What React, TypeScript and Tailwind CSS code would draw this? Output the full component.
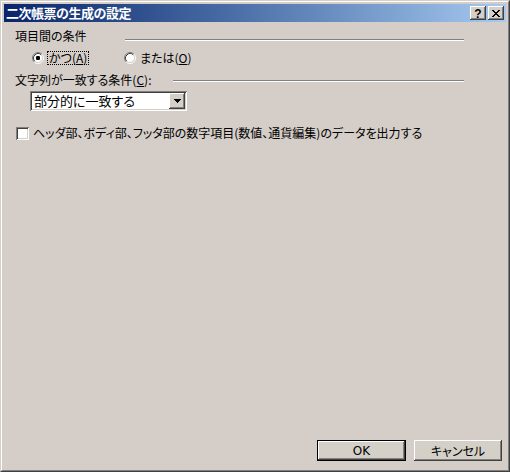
import React from "react";

const raised =
  "shadow-[inset_-1px_-1px_#404040,inset_1px_1px_#ffffff,inset_-2px_-2px_#808080,inset_2px_2px_#d4d0c8]";
const sunken =
  "shadow-[inset_1px_1px_#808080,inset_-1px_-1px_#ffffff,inset_2px_2px_#404040,inset_-2px_-2px_#d4d0c8]";

function Radio({ checked }: { checked?: boolean }) {
  return (
    <svg width="12" height="12" viewBox="0 0 12 12" className="shrink-0">
      <circle cx="6" cy="6" r="4.5" fill="#ffffff" />
      <path d="M2.11 9.89 A5.5 5.5 0 0 1 9.89 2.11" stroke="#808080" strokeWidth="1" fill="none" />
      <path d="M9.89 2.11 A5.5 5.5 0 0 1 2.11 9.89" stroke="#ffffff" strokeWidth="1" fill="none" />
      <path d="M2.82 9.18 A4.5 4.5 0 0 1 9.18 2.82" stroke="#404040" strokeWidth="1" fill="none" />
      <path d="M9.18 2.82 A4.5 4.5 0 0 1 2.82 9.18" stroke="#d4d0c8" strokeWidth="1" fill="none" />
      {checked && <rect x="4" y="4" width="4" height="4" rx="1.2" fill="#000000" />}
    </svg>
  );
}

function Etched() {
  return <div className="flex-1 h-[2px] border-t border-t-[#808080] border-b border-b-[#ffffff]" />;
}

export default function App() {
  return (
    <div
      className="w-[510px] h-[472px] bg-[#d4cdc8] border border-t-[#d4d0c8] border-l-[#d4d0c8] border-r-[#404040] border-b-[#404040] text-black"
      style={{ fontFamily: '"Noto Sans CJK JP", "Noto Sans", sans-serif' }}
    >
      <div className="w-full h-full border border-t-white border-l-white border-r-[#808080] border-b-[#808080] p-[2px] flex flex-col">
        {/* Title bar */}
        <div className="h-[18px] shrink-0 bg-gradient-to-r from-[#0a246a] to-[#a6caf0] flex items-center pl-[2px] pr-[2px]">
          <div className="flex-1 text-white font-bold text-[13px] leading-[18px] tracking-[-0.5px]">
            二次帳票の生成の設定
          </div>
          <div className="flex gap-[2px] items-center">
            <div className={`w-[16px] h-[14px] bg-[#d4d0c8] ${raised} flex items-center justify-center`}>
              <span className="text-[12px] font-bold leading-none mt-[1px]" style={{ fontFamily: '"Liberation Sans", sans-serif' }}>?</span>
            </div>
            <div className={`w-[16px] h-[14px] bg-[#d4d0c8] ${raised} flex items-center justify-center`}>
              <svg width="8" height="7" viewBox="0 0 8 7" shapeRendering="crispEdges">
                <path d="M0 0h2v1h-2zM6 0h2v1h-2zM1 1h2v1h-2zM5 1h2v1h-2zM2 2h4v1h-4zM3 3h2v1h-2zM2 4h4v1h-4zM1 5h2v1h-2zM5 5h2v1h-2zM0 6h2v1h-2zM6 6h2v1h-2z" fill="#000" />
              </svg>
            </div>
          </div>
        </div>

        {/* Body */}
        <div className="flex-1 flex flex-col text-[12px] leading-[14px] [font-feature-settings:'palt'] pr-[42px]">
          <div className="flex items-start mt-[7px] pl-[11px]">
            <div className="w-[110px] h-[14px] whitespace-nowrap">項目間の条件</div>
            <div className="flex-1 mt-[10px] flex"><Etched /></div>
          </div>

          <div className="flex items-center h-[16px] mt-[7px] pl-[28px]">
            <div className="w-[92px] flex items-center">
              <Radio checked />
              <span className="ml-[3px] px-[1px] border border-dotted border-black leading-[12px] h-[14px] whitespace-nowrap">
                かつ(<span className="underline">A</span>)
              </span>
            </div>
            <div className="flex items-center">
              <Radio />
              <span className="ml-[4px] whitespace-nowrap">
                または(<span className="underline">O</span>)
              </span>
            </div>
          </div>

          <div className="flex items-start mt-[7px] pl-[11px]">
            <div className="w-[158px] h-[14px] whitespace-nowrap">
              文字列が一致する条件(<span className="underline">C</span>):
            </div>
            <div className="flex-1 mt-[7px] flex"><Etched /></div>
          </div>

          <div className={`ml-[26px] mt-[4px] w-[157px] h-[20px] bg-white ${sunken} flex items-center p-[2px]`}>
            <div className="flex-1 pl-[2px] text-[13px] leading-[16px] whitespace-nowrap">部分的に一致する</div>
            <div className={`w-[16px] h-[16px] bg-[#d4d0c8] ${raised} flex items-center justify-center`}>
              <svg width="7" height="4" viewBox="0 0 7 4" shapeRendering="crispEdges">
                <path d="M0 0h7v1h-7zM1 1h5v1h-5zM2 2h3v1h-3zM3 3h1v1h-1z" fill="#000" />
              </svg>
            </div>
          </div>

          <div className="flex items-center mt-[15px] pl-[12px]">
            <div className={`w-[13px] h-[13px] bg-white ${sunken} shrink-0`} />
            <span className="ml-[4px] whitespace-nowrap">
              ヘッダ部、ボディ部、フッタ部の数字項目(数値、通貨編集)のデータを出力する
            </span>
          </div>

          <div className="flex-1" />

          <div className="flex justify-end gap-[8px] mb-[7px] mr-[-38px]">
            <div className="w-[89px] h-[21px] border border-black">
              <div className={`w-full h-full bg-[#d4d0c8] ${raised} flex items-center justify-center`}>
                <span className="text-[12px] leading-none" style={{ fontFamily: '"DejaVu Sans", sans-serif' }}>OK</span>
              </div>
            </div>
            <div className={`w-[88px] h-[21px] bg-[#d4d0c8] ${raised} flex items-center justify-center`}>
              <span className="text-[12px] leading-none">キャンセル</span>
            </div>
          </div>
        </div>
      </div>
    </div>
  );
}
